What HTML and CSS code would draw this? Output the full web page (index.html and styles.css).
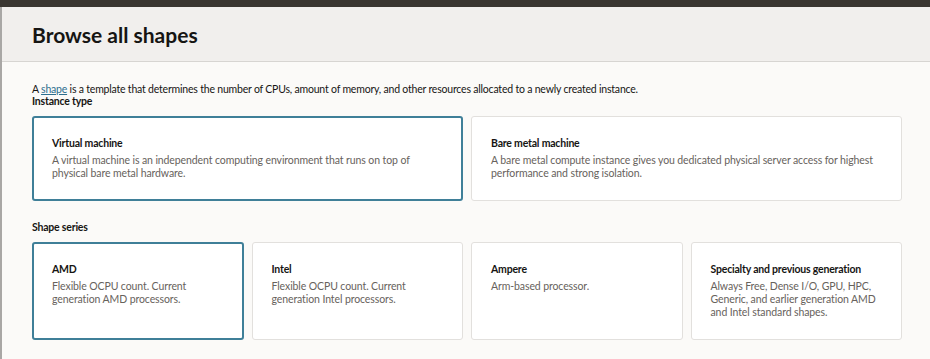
FILE: index.html
```html
<!DOCTYPE html>
<html lang="en">
<head>
  <meta charset="UTF-8">
  <meta name="viewport" content="width=device-width, initial-scale=1.0">
  <title>Browse all shapes</title>
  <link rel="stylesheet" href="styles.css">
</head>
<body>

  <!-- Console top bar -->
  <div class="top-bar"></div>

  <div class="page">
    <!-- Sliver of the page behind the panel -->
    <div class="behind"></div>

    <div class="panel">
      <div class="panel-header">
        <h1 class="panel-title">Browse all shapes</h1>
      </div>

      <div class="panel-body">
        <p class="intro">A <a href="#" class="link">shape</a> is a template that determines the number of CPUs, amount of memory, and other resources allocated to a newly created instance.</p>

        <div class="group-label">Instance type</div>
        <div class="card-row two">
          <div class="card selected">
            <div class="card-title">Virtual machine</div>
            <div class="card-text">A virtual machine is an independent computing environment that runs on top of physical bare metal hardware.</div>
          </div>
          <div class="card">
            <div class="card-title">Bare metal machine</div>
            <div class="card-text">A bare metal compute instance gives you dedicated physical server access for highest performance and strong isolation.</div>
          </div>
        </div>

        <div class="group-label series">Shape series</div>
        <div class="card-row four">
          <div class="card selected">
            <div class="card-title">AMD</div>
            <div class="card-text">Flexible OCPU count. Current generation AMD processors.</div>
          </div>
          <div class="card">
            <div class="card-title">Intel</div>
            <div class="card-text">Flexible OCPU count. Current generation Intel processors.</div>
          </div>
          <div class="card">
            <div class="card-title">Ampere</div>
            <div class="card-text">Arm-based processor.</div>
          </div>
          <div class="card">
            <div class="card-title">Specialty and previous generation</div>
            <div class="card-text">Always Free, Dense I/O, GPU, HPC, Generic, and earlier generation AMD and Intel standard shapes.</div>
          </div>
        </div>
      </div>
    </div>
  </div>

</body>
</html>
```

FILE: styles.css
```css
/* Basic reset */
* {
  margin: 0;
  padding: 0;
  box-sizing: border-box;
  font-family: Lato, "Noto Sans", sans-serif;
}

body {
  background-color: #fbfaf8;
  color: #161513;
  height: 359px;
  overflow: hidden;
}

.top-bar {
  height: 7px;
  background-color: #3a3631;
}

.page {
  display: flex;
  height: 352px;
}

.behind {
  width: 2px;
  background-color: #a9a7a5;
}

.panel {
  flex: 1;
  background-color: #fbfaf8;
}

.panel-header {
  height: 55px;
  background-color: #f1efed;
  border-bottom: 1px solid #d7d5d2;
  padding: 0 30px;
  display: flex;
  align-items: center;
}

.panel-title {
  font-size: 21px;
  font-weight: bold;
}

.panel-body {
  padding: 21px 28px 0 30px;
}

.intro {
  font-size: 10.5px;
  line-height: 12px;
  letter-spacing: -0.2px;
}

.link {
  color: #2d6e8e;
}

.group-label {
  font-size: 10.5px;
  line-height: 12px;
  letter-spacing: -0.2px;
  font-weight: bold;
  margin-bottom: 9px;
}

.group-label.series {
  margin-top: 20px;
  margin-bottom: 9px;
}

.card-row {
  display: grid;
  gap: 8px;
}

.card-row.two {
  grid-template-columns: 1fr 1fr;
}

.card-row.four {
  grid-template-columns: repeat(4, 1fr);
}

.card {
  background-color: #ffffff;
  border: 1px solid #e2e0dd;
  border-radius: 3px;
  padding: 19px 19px 20px 19px;
}

.card.selected {
  border: 2px solid #3f7f98;
  padding: 18px 18px 19px 18px;
}

.card-title {
  font-size: 10.5px;
  line-height: 14px;
  letter-spacing: -0.2px;
  font-weight: bold;
  margin-bottom: 4px;
}

.card-text {
  font-size: 10.5px;
  line-height: 13px;
  letter-spacing: -0.1px;
  color: #67625c;
}
```
